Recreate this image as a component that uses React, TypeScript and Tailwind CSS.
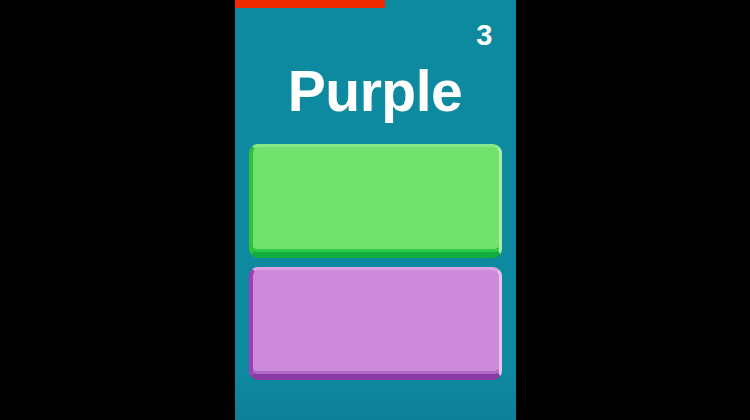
export default function App() {
  return (
    <div className="w-[750px] h-[420px] bg-black flex justify-center" style={{ fontFamily: '"Liberation Sans", Arial, sans-serif' }}>
      <div className="w-[281px] h-full flex flex-col bg-gradient-to-b from-[#0e8aa0] from-88% to-[#0e8098]">
        <div className="h-[8px] w-[150px] bg-[#ee2a00]" />
        <div className="flex justify-end pr-[23px] mt-[13px]">
          <span className="text-white font-bold text-[29px] leading-[28px]">3</span>
        </div>
        <h1 className="text-white font-bold text-center text-[57px] leading-[57px] mt-[14px] tracking-[-0.5px]">Purple</h1>
        <div className="flex flex-col gap-[9px] px-[14px] mt-[24px]">
          <button className="h-[114px] rounded-[9px] bg-[#72e26e] border-l-[4px] border-b-[6px] border-t-[3px] border-r-[3px] border-l-[#2ec23c] border-b-[#12ad3a] border-t-[#88e888] border-r-[#a9efa6] shadow-[inset_0_-3px_0_#2ccb4a]" />
          <button className="h-[113px] rounded-[9px] bg-[#ce8bdb] border-l-[4px] border-b-[6px] border-t-[3px] border-r-[3px] border-l-[#a040b8] border-b-[#8b39a3] border-t-[#dca2e6] border-r-[#e9c2ef] shadow-[inset_0_-3px_0_#b06cc4]" />
        </div>
      </div>
    </div>
  );
}
